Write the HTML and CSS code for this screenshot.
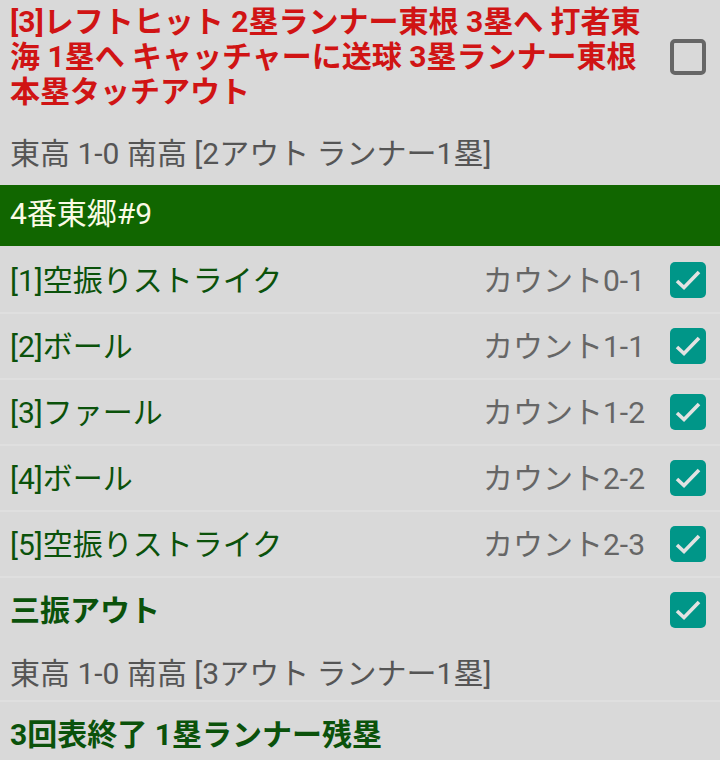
FILE: index.html
```html
<!DOCTYPE html>
<html lang="ja">
<head>
    <meta charset="UTF-8">
    <meta name="viewport" content="width=device-width, initial-scale=1.0">
    <title>一球速報</title>
    <link rel="stylesheet" href="styles.css">
</head>
<body>

    <!-- 前の打席 (上にスクロール済み) -->
    <div class="play">
        <div class="play-head">
            <div class="play-text red">[3]レフトヒット 2塁ランナー東根 3塁へ 打者東海 1塁へ キャッチャーに送球 3塁ランナー東根本塁タッチアウト</div>
            <span class="check"></span>
        </div>
        <div class="score">東高 1-0 南高 [2アウト ランナー1塁]</div>
    </div>

    <!-- 打者 -->
    <div class="batter">4番東郷#9</div>

    <div class="pitch">
        <span class="pitch-name">[1]空振りストライク</span>
        <span class="count">カウント0-1</span>
        <span class="check on"><svg viewBox="0 0 36 36"><path d="M7 19 L14 25.5 L29 10"/></svg></span>
    </div>
    <div class="pitch">
        <span class="pitch-name">[2]ボール</span>
        <span class="count">カウント1-1</span>
        <span class="check on"><svg viewBox="0 0 36 36"><path d="M7 19 L14 25.5 L29 10"/></svg></span>
    </div>
    <div class="pitch">
        <span class="pitch-name">[3]ファール</span>
        <span class="count">カウント1-2</span>
        <span class="check on"><svg viewBox="0 0 36 36"><path d="M7 19 L14 25.5 L29 10"/></svg></span>
    </div>
    <div class="pitch">
        <span class="pitch-name">[4]ボール</span>
        <span class="count">カウント2-2</span>
        <span class="check on"><svg viewBox="0 0 36 36"><path d="M7 19 L14 25.5 L29 10"/></svg></span>
    </div>
    <div class="pitch">
        <span class="pitch-name">[5]空振りストライク</span>
        <span class="count">カウント2-3</span>
        <span class="check on"><svg viewBox="0 0 36 36"><path d="M7 19 L14 25.5 L29 10"/></svg></span>
    </div>

    <!-- 打席結果 -->
    <div class="result">
        <div class="pitch no-line">
            <span class="pitch-name bold">三振アウト</span>
            <span class="check on"><svg viewBox="0 0 36 36"><path d="M7 19 L14 25.5 L29 10"/></svg></span>
        </div>
        <div class="score result-score">東高 1-0 南高 [3アウト ランナー1塁]</div>
    </div>

    <div class="pitch">
        <span class="pitch-name bold">3回表終了 1塁ランナー残塁</span>
    </div>

</body>
</html>
```

FILE: styles.css
```css
body {
    margin: 0;
    background-color: #d9d9d9;
    font-family: "Roboto", "Noto Sans CJK JP", sans-serif;
    font-size: 30px;
    overflow: hidden;
}

.play {
    padding: 4px 14px 14px 10px;
}

.play-head {
    display: flex;
    align-items: center;
}

.play-text {
    flex: 1;
    line-height: 35px;
    padding-right: 20px;
}

.red {
    color: #d01414;
    font-weight: bold;
}

.score {
    color: #555;
    line-height: 35px;
    margin-top: 27px;
}

.batter {
    height: 61px;
    line-height: 57px;
    padding-left: 10px;
    background-color: #116600;
    color: #fbfbe6;
}

.pitch {
    display: flex;
    align-items: center;
    box-sizing: border-box;
    height: 66px;
    padding: 0 14px 4px 10px;
    border-top: 2px solid #dfdfdf;
}

.batter + .pitch {
    border-top-color: #d9d9d9;
}

.pitch.no-line {
    height: 64px;
    border-top: none;
}

.pitch-name {
    flex: 1;
    color: #0b520b;
}

.bold {
    font-weight: bold;
}

.count {
    color: #666;
    margin-right: 25px;
}

.check.on {
    margin-top: 4px;
}

.result {
    border-top: 2px solid #dfdfdf;
    padding-bottom: 9px;
}

.result-score {
    margin-top: 14px;
    padding-left: 10px;
}

.check {
    flex: none;
    width: 36px;
    height: 36px;
    box-sizing: border-box;
    border: 4px solid #666;
    border-radius: 5px;
}

.check.on {
    border: none;
    background-color: #009688;
}

.check svg {
    display: block;
    width: 36px;
    height: 36px;
    fill: none;
    stroke: #e2e2e2;
    stroke-width: 3.6;
}
```
